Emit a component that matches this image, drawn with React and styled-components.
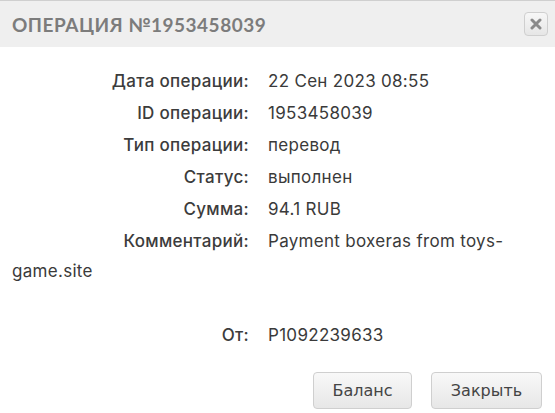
import React from "react"
import styled, { createGlobalStyle } from "styled-components"

const Global = createGlobalStyle`
  html, body {
    margin: 0;
    padding: 0;
    background: #fff;
  }
  body {
    width: 555px;
    height: 413px;
    overflow: hidden;
  }
`

const Dialog = styled.div`
  width: 555px;
  height: 413px;
  display: flex;
  flex-direction: column;
  background: #fff;
`

const Header = styled.div`
  height: 46px;
  border-top: 1px solid #cfcfcf;
  background: #efefef;
  display: flex;
  align-items: center;
  justify-content: space-between;
  padding: 0 7px 0 12px;
`

const Title = styled.div`
  font-family: "Lato", "DejaVu Sans", sans-serif;
  font-weight: 700;
  font-size: 19px;
  letter-spacing: 0.5px;
  color: #7c7c7c;
  text-transform: uppercase;
`

const CloseButton = styled.button`
  width: 24px;
  height: 24px;
  padding: 0;
  border: 1px solid #cfcfcf;
  border-radius: 4px;
  background: linear-gradient(#f7f7f7, #e6e6e6);
  display: flex;
  align-items: center;
  justify-content: center;
  cursor: pointer;
`

const Body = styled.div`
  flex: 1;
  padding: 19px 12px 0;
  font-family: "Inter", "Liberation Sans", sans-serif;
  font-size: 17px;
  letter-spacing: 0.3px;
  color: #3a3a3a;
`

const Row = styled.div`
  line-height: 30px;
  margin-bottom: 2px;
  min-height: 30px;
`

const Label = styled.span`
  float: left;
  height: 30px;
  width: 237px;
  margin-right: 19px;
  text-align: right;
  font-weight: 500;
  color: #3c3c3c;
`

const Footer = styled.div`
  display: flex;
  justify-content: flex-end;
  gap: 19px;
  padding: 0 13px 4px 0;
`

const Button = styled.button`
  height: 37px;
  width: ${p => p.$w}px;
  border: 1px solid #cfcfcf;
  border-radius: 4px;
  background: linear-gradient(#f8f8f8, #e7e7e7);
  font-family: "DejaVu Sans", "Verdana", sans-serif;
  font-size: 16px;
  color: #444;
  cursor: pointer;
`

const rows = [
  ["Дата операции:", "22 Сен 2023 08:55"],
  ["ID операции:", "1953458039"],
  ["Тип операции:", "перевод"],
  ["Статус:", "выполнен"],
  ["Сумма:", "94.1 RUB"],
  ["Комментарий:", "Payment boxeras from toys-game.site"],
]

export default function App() {
  return (
    <>
      <Global />
      <Dialog>
        <Header>
          <Title>Операция №1953458039</Title>
          <CloseButton>
            <svg width="12" height="12" viewBox="0 0 12 12">
              <path d="M2 2L10 10M10 2L2 10" stroke="#8a8a8a" strokeWidth="3" strokeLinecap="round" />
            </svg>
          </CloseButton>
        </Header>
        <Body>
          {rows.map(([l, v]) => (
            <Row key={l}>
              <Label>{l}</Label>
              {v}
            </Row>
          ))}
          <Row />
          <Row>
            <Label>От:</Label>
            P1092239633
          </Row>
        </Body>
        <Footer>
          <Button $w={99}>Баланс</Button>
          <Button $w={111}>Закрыть</Button>
        </Footer>
      </Dialog>
    </>
  )
}
